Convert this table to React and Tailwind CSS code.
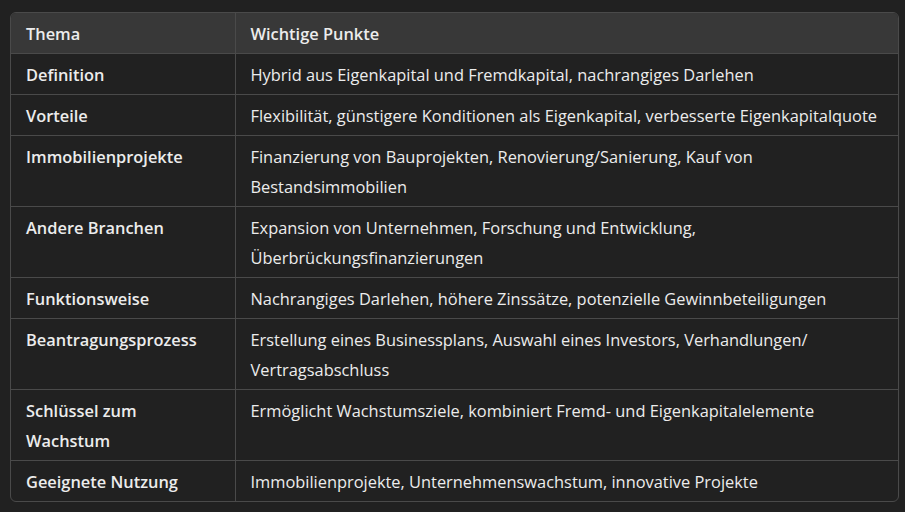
import React from 'react';

const rows = [
  ['Definition', 'Hybrid aus Eigenkapital und Fremdkapital, nachrangiges Darlehen'],
  ['Vorteile', 'Flexibilität, günstigere Konditionen als Eigenkapital, verbesserte Eigenkapitalquote'],
  ['Immobilienprojekte', 'Finanzierung von Bauprojekten, Renovierung/Sanierung, Kauf von Bestandsimmobilien'],
  ['Andere Branchen', 'Expansion von Unternehmen, Forschung und Entwicklung, Überbrückungsfinanzierungen'],
  ['Funktionsweise', 'Nachrangiges Darlehen, höhere Zinssätze, potenzielle Gewinnbeteiligungen'],
  ['Beantragungsprozess', 'Erstellung eines Businessplans, Auswahl eines Investors, Verhandlungen/ Vertragsabschluss'],
  ['Schlüssel zum Wachstum', 'Ermöglicht Wachstumsziele, kombiniert Fremd- und Eigenkapitalelemente'],
  ['Geeignete Nutzung', 'Immobilienprojekte, Unternehmenswachstum, innovative Projekte'],
];

const App = () => {
  return (
    <div className="min-h-screen bg-[#212121] pl-[10px] pt-[12px] text-[#ececec] font-['Open_Sans','Liberation_Sans',sans-serif] text-[16.4px]">
      <div className="w-[889px] border border-[#4a4a4a] rounded-md overflow-hidden">
        <table className="w-full table-fixed border-collapse text-left">
          <colgroup>
            <col className="w-[224px]" />
            <col />
          </colgroup>
          <thead>
            <tr className="bg-[#383838] border-b border-[#4a4a4a]">
              <th className="px-[15px] pt-[6px] pb-[4px] leading-[30px] font-semibold">Thema</th>
              <th className="px-[15px] pt-[6px] pb-[4px] leading-[30px] font-semibold border-l border-[#4a4a4a]">Wichtige Punkte</th>
            </tr>
          </thead>
          <tbody>
            {rows.map(([topic, points], i) => (
              <tr key={topic} className={i < rows.length - 1 ? 'border-b border-[#4a4a4a]' : ''}>
                <td className="px-[15px] pt-[6px] pb-[4px] leading-[30px] font-semibold align-top">{topic}</td>
                <td className="px-[15px] pt-[6px] pb-[4px] leading-[30px] align-top border-l border-[#4a4a4a]">{points}</td>
              </tr>
            ))}
          </tbody>
        </table>
      </div>
    </div>
  );
};

export default App;
